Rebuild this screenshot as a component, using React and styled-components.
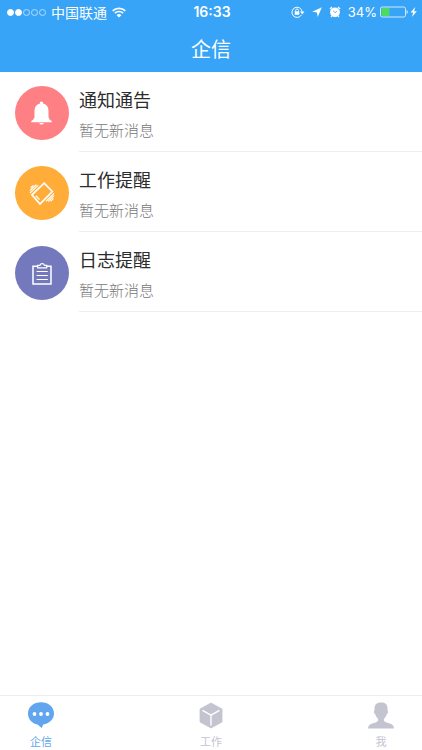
import React from "react";
import styled, { createGlobalStyle } from "styled-components";

const messages = [
  { title: "通知通告", text: "暂无新消息", color: "#ff8084", icon: BellIcon },
  { title: "工作提醒", text: "暂无新消息", color: "#ffac38", icon: ShakeIcon },
  { title: "日志提醒", text: "暂无新消息", color: "#7479be", icon: ClipboardIcon },
];

const tabs = [
  { label: "企信", icon: ChatIcon, active: true },
  { label: "工作", icon: CubeIcon },
  { label: "我", icon: PersonIcon },
];

export default function App() {
  return (
    <>
      <GlobalStyle />
      <Page>
        <Header>
          <StatusBar>
            <StatusGroup>
              <Signal>
                <Dot $filled />
                <Dot $filled />
                <Dot />
                <Dot />
                <Dot />
              </Signal>
              <span>中国联通</span>
              <WifiIcon />
            </StatusGroup>
            <Time>16:33</Time>
            <StatusGroup $end>
              <RotationLockIcon />
              <LocationIcon />
              <AlarmIcon />
              <Battery>
                <span>34%</span>
                <BatteryIcon />
              </Battery>
            </StatusGroup>
          </StatusBar>
          <Title>企信</Title>
        </Header>

        <List>
          {messages.map((item) => (
            <Row key={item.title}>
              <Avatar $color={item.color}>
                <item.icon />
              </Avatar>
              <RowBody>
                <h2>{item.title}</h2>
                <p>{item.text}</p>
              </RowBody>
            </Row>
          ))}
        </List>

        <TabBar>
          {tabs.map((tab) => (
            <Tab key={tab.label} type="button" $active={tab.active}>
              <tab.icon />
              <span>{tab.label}</span>
            </Tab>
          ))}
        </TabBar>
      </Page>
    </>
  );
}

function WifiIcon() {
  return (
    <svg width="14" height="11" viewBox="0 0 14 11" fill="none" stroke="#fff" strokeWidth="1.7">
      <path d="M.7 3.9a9 9 0 0 1 12.6 0" />
      <path d="M2.9 6.2a5.8 5.8 0 0 1 8.2 0" />
      <path d="M7 10.6 4.6 8.2a3.4 3.4 0 0 1 4.8 0z" fill="#fff" stroke="none" />
    </svg>
  );
}

function RotationLockIcon() {
  return (
    <svg width="14" height="12" viewBox="0 0 14 12" fill="none" stroke="#fff">
      <path d="M10.4 9A5.1 5.1 0 1 1 11.1 5.6" />
      <path d="M9 5.6h4.4L11.2 8.4z" fill="#fff" stroke="none" />
      <rect x="3.7" y="5.3" width="4.6" height="3.5" fill="#fff" stroke="none" />
      <path d="M4.6 5.5V4.4a1.4 1.4 0 0 1 2.8 0v1.1" strokeWidth=".9" />
    </svg>
  );
}

function LocationIcon() {
  return (
    <svg width="10" height="10" viewBox="0 0 10 10" fill="#fff">
      <path d="M9.9.2 5.700 10 5 5.400.2 4.700z" />
    </svg>
  );
}

function AlarmIcon() {
  return (
    <svg width="12" height="12" viewBox="0 0 12 12">
      <circle cx="6" cy="6.3" r="4.9" fill="#fff" />
      <path d="M.9 3 3 1M11.1 3 9 1M2.900 9.900l-.8 1.200M9.100 9.900l.8 1.200" stroke="#fff" strokeWidth="1.2" />
      <path d="M4 4.700 6 6.600l1.900-1.200" fill="none" stroke="#38a4f8" strokeWidth=".8" />
    </svg>
  );
}

function BatteryIcon() {
  return (
    <svg width="37" height="12" viewBox="0 0 37 12">
      <rect x=".5" y="1" width="25" height="10" rx="1.8" fill="none" stroke="#cfe9fc" />
      <rect x="1.5" y="2" width="8" height="8" rx=".6" fill="#4cd964" />
      <path d="M26.5 4.3a1.8 1.8 0 0 1 0 3.5z" fill="#cfe9fc" />
      <path d="m35.3 1-4.8 5.6h2.7L31.9 11l4.9-5.8h-2.7z" fill="#fff" />
    </svg>
  );
}

function BellIcon() {
  return (
    <svg width="54" height="54" viewBox="0 0 54 54" fill="#fff">
      <path d="M26.500 15.500a1.700 1.700 0 0 1 1.600 2c3.500.8 5.400 3.600 5.400 7.200v5.500c0 2.200 1 3.600 3.200 4.700v1.400H16.300v-1.400c2.200-1.100 3.200-2.500 3.200-4.700v-5.500c0-3.600 1.900-6.400 5.400-7.200a1.700 1.700 0 0 1 1.600-2z" />
      <path d="M24.200 37h4.600a2.400 2.200 0 0 1-4.600 0z" />
    </svg>
  );
}

function ShakeIcon() {
  return (
    <svg width="54" height="54" viewBox="0 0 54 54" fill="none" stroke="#fff">
      <path d="m16.900 28.800 12.300-11.600 8.100 8.300L25 38z" strokeWidth="1.700" />
      <path d="m20.900 29.700 3.600 3.900" strokeWidth="1.300" />
      <path d="m15 27 8.200-7.600M15 24.500l6.400-5.700M15.600 21.800l2.800-2.400" strokeWidth="1.200" />
      <path d="m31 35.300 8-7.900M33.200 35.500l5.800-5.900M35.600 35.400l2.900-3" strokeWidth="1.200" />
    </svg>
  );
}

function ClipboardIcon() {
  return (
    <svg width="54" height="54" viewBox="0 0 54 54" fill="none" stroke="#fff">
      <path d="M22.4 20.2h-4.4v17.900h18V20.200h-4.400" strokeWidth="1.500" />
      <path d="M22.7 21.9v-2.600h2.200a2.400 2.400 0 0 1 4.600 0h2.200v2.600z" strokeWidth="1.200" />
      <path d="M21.600 25.500h11.200M21.600 29.500h11.200M21.600 33.500h11.200" strokeWidth="1.200" />
    </svg>
  );
}

function ChatIcon() {
  return (
    <svg width="28" height="28" viewBox="0 0 28 28" fill="currentColor">
      <path d="M14 1.2c7.4 0 13 4.8 13 11.2 0 5.6-4.6 10-10.8 11L14.7 27l-4.2-3.4C5 22.4 1 18 1 12.4 1 6 6.6 1.2 14 1.2z" />
      <g fill="#fff">
        <circle cx="7.5" cy="13" r="1.9" />
        <circle cx="14" cy="13" r="1.9" />
        <circle cx="20.5" cy="13" r="1.9" />
      </g>
    </svg>
  );
}

function CubeIcon() {
  return (
    <svg width="28" height="28" viewBox="0 0 28 28">
      <path d="m14 2 11 6v13L14 27 3 21V8z" fill="currentColor" stroke="currentColor" strokeWidth=".8" strokeLinejoin="round" />
      <path d="m5.5 9.4 8.5 4.7 8.5-4.7M14 14.1v10.4" fill="none" stroke="#fff" strokeWidth="1.4" />
    </svg>
  );
}

function PersonIcon() {
  return (
    <svg width="28" height="28" viewBox="0 0 28 28" fill="currentColor">
      <path d="M14 1.4c4.3-.3 6.9 2.2 6.5 6.8v1.3c1 .2.7 3.2-.7 3.6-.5 2-1.5 3.5-2.9 4.8v1.9c1.2 1.6 3.8 1.9 6 2.7 2.6.9 3.8 2 4.1 4.900H1c.3-2.900 1.500-4 4.100-4.900 2.200-.8 4.800-1.100 6-2.700v-1.900c-1.400-1.300-2.400-2.800-2.900-4.800-1.400-.4-1.700-3.400-.7-3.600V8.200c-.3-4.300 2-6.800 6.500-6.800z" />
    </svg>
  );
}

const GlobalStyle = createGlobalStyle`
  * {
    box-sizing: border-box;
  }

  body {
    margin: 0;
    background: #fff;
    font-family: "Noto Sans CJK SC", sans-serif;
  }

  h1, h2, p {
    margin: 0;
    font-weight: 400;
  }

  svg {
    display: block;
    flex: none;
  }
`;

const Page = styled.div`
  display: flex;
  flex-direction: column;
  min-height: 100vh;
`;

const Header = styled.header`
  background: #38a4f8;
  color: #fff;
`;

const StatusBar = styled.div`
  display: grid;
  grid-template-columns: 1fr auto 1fr;
  align-items: center;
  height: 24px;
  padding: 0 5px 0 7px;
  font-size: 14px;
  line-height: 22px;
`;

const StatusGroup = styled.div`
  display: flex;
  align-items: center;
  justify-content: ${(props) => (props.$end ? "flex-end" : "flex-start")};
  gap: ${(props) => (props.$end ? "7px" : "5px")};
`;

const Signal = styled.div`
  display: flex;
  gap: 1px;
`;

const Dot = styled.i`
  width: 7px;
  height: 7px;
  border: 1px solid ${(props) => (props.$filled ? "#fff" : "#b4dcfb")};
  border-radius: 50%;
  background: ${(props) => (props.$filled ? "#fff" : "transparent")};
`;

const Time = styled.span`
  font-family: Inter, sans-serif;
  font-size: 14px;
  font-weight: 600;
`;

const Battery = styled.div`
  display: flex;
  align-items: center;
  gap: 3px;
  font-family: Inter, sans-serif;
  font-size: 13px;
`;

const Title = styled.h1`
  height: 48px;
  font-size: 20px;
  line-height: 50px;
  text-align: center;
`;

const List = styled.main`
  flex: 1;
`;

const Row = styled.section`
  display: flex;
  align-items: center;
  gap: 10px;
  padding-left: 15px;
`;

const Avatar = styled.div`
  flex: none;
  width: 54px;
  height: 54px;
  margin-top: 2px;
  border-radius: 50%;
  background: ${(props) => props.$color};
`;

const RowBody = styled.div`
  flex: 1;
  padding: 13px 0 5px;
  border-bottom: 1px solid #efefef;

  h2 {
    color: #2c2c2c;
    font-size: 18px;
    line-height: 28px;
  }

  p {
    margin-top: 3px;
    color: #777;
    font-size: 15px;
    font-weight: 300;
    line-height: 28px;
    padding-bottom: 2px;
  }
`;

const TabBar = styled.nav`
  display: flex;
  justify-content: space-between;
  border-top: 1px solid #eee;
`;

const Tab = styled.button`
  display: flex;
  flex-direction: column;
  align-items: center;
  gap: 4px;
  width: 82px;
  padding: 5px 0 1px;
  border: 0;
  background: none;
  color: ${(props) => (props.$active ? "#60a5ee" : "#c4c4d0")};
  font-family: inherit;
  font-size: 11px;
  line-height: 16px;
`;
